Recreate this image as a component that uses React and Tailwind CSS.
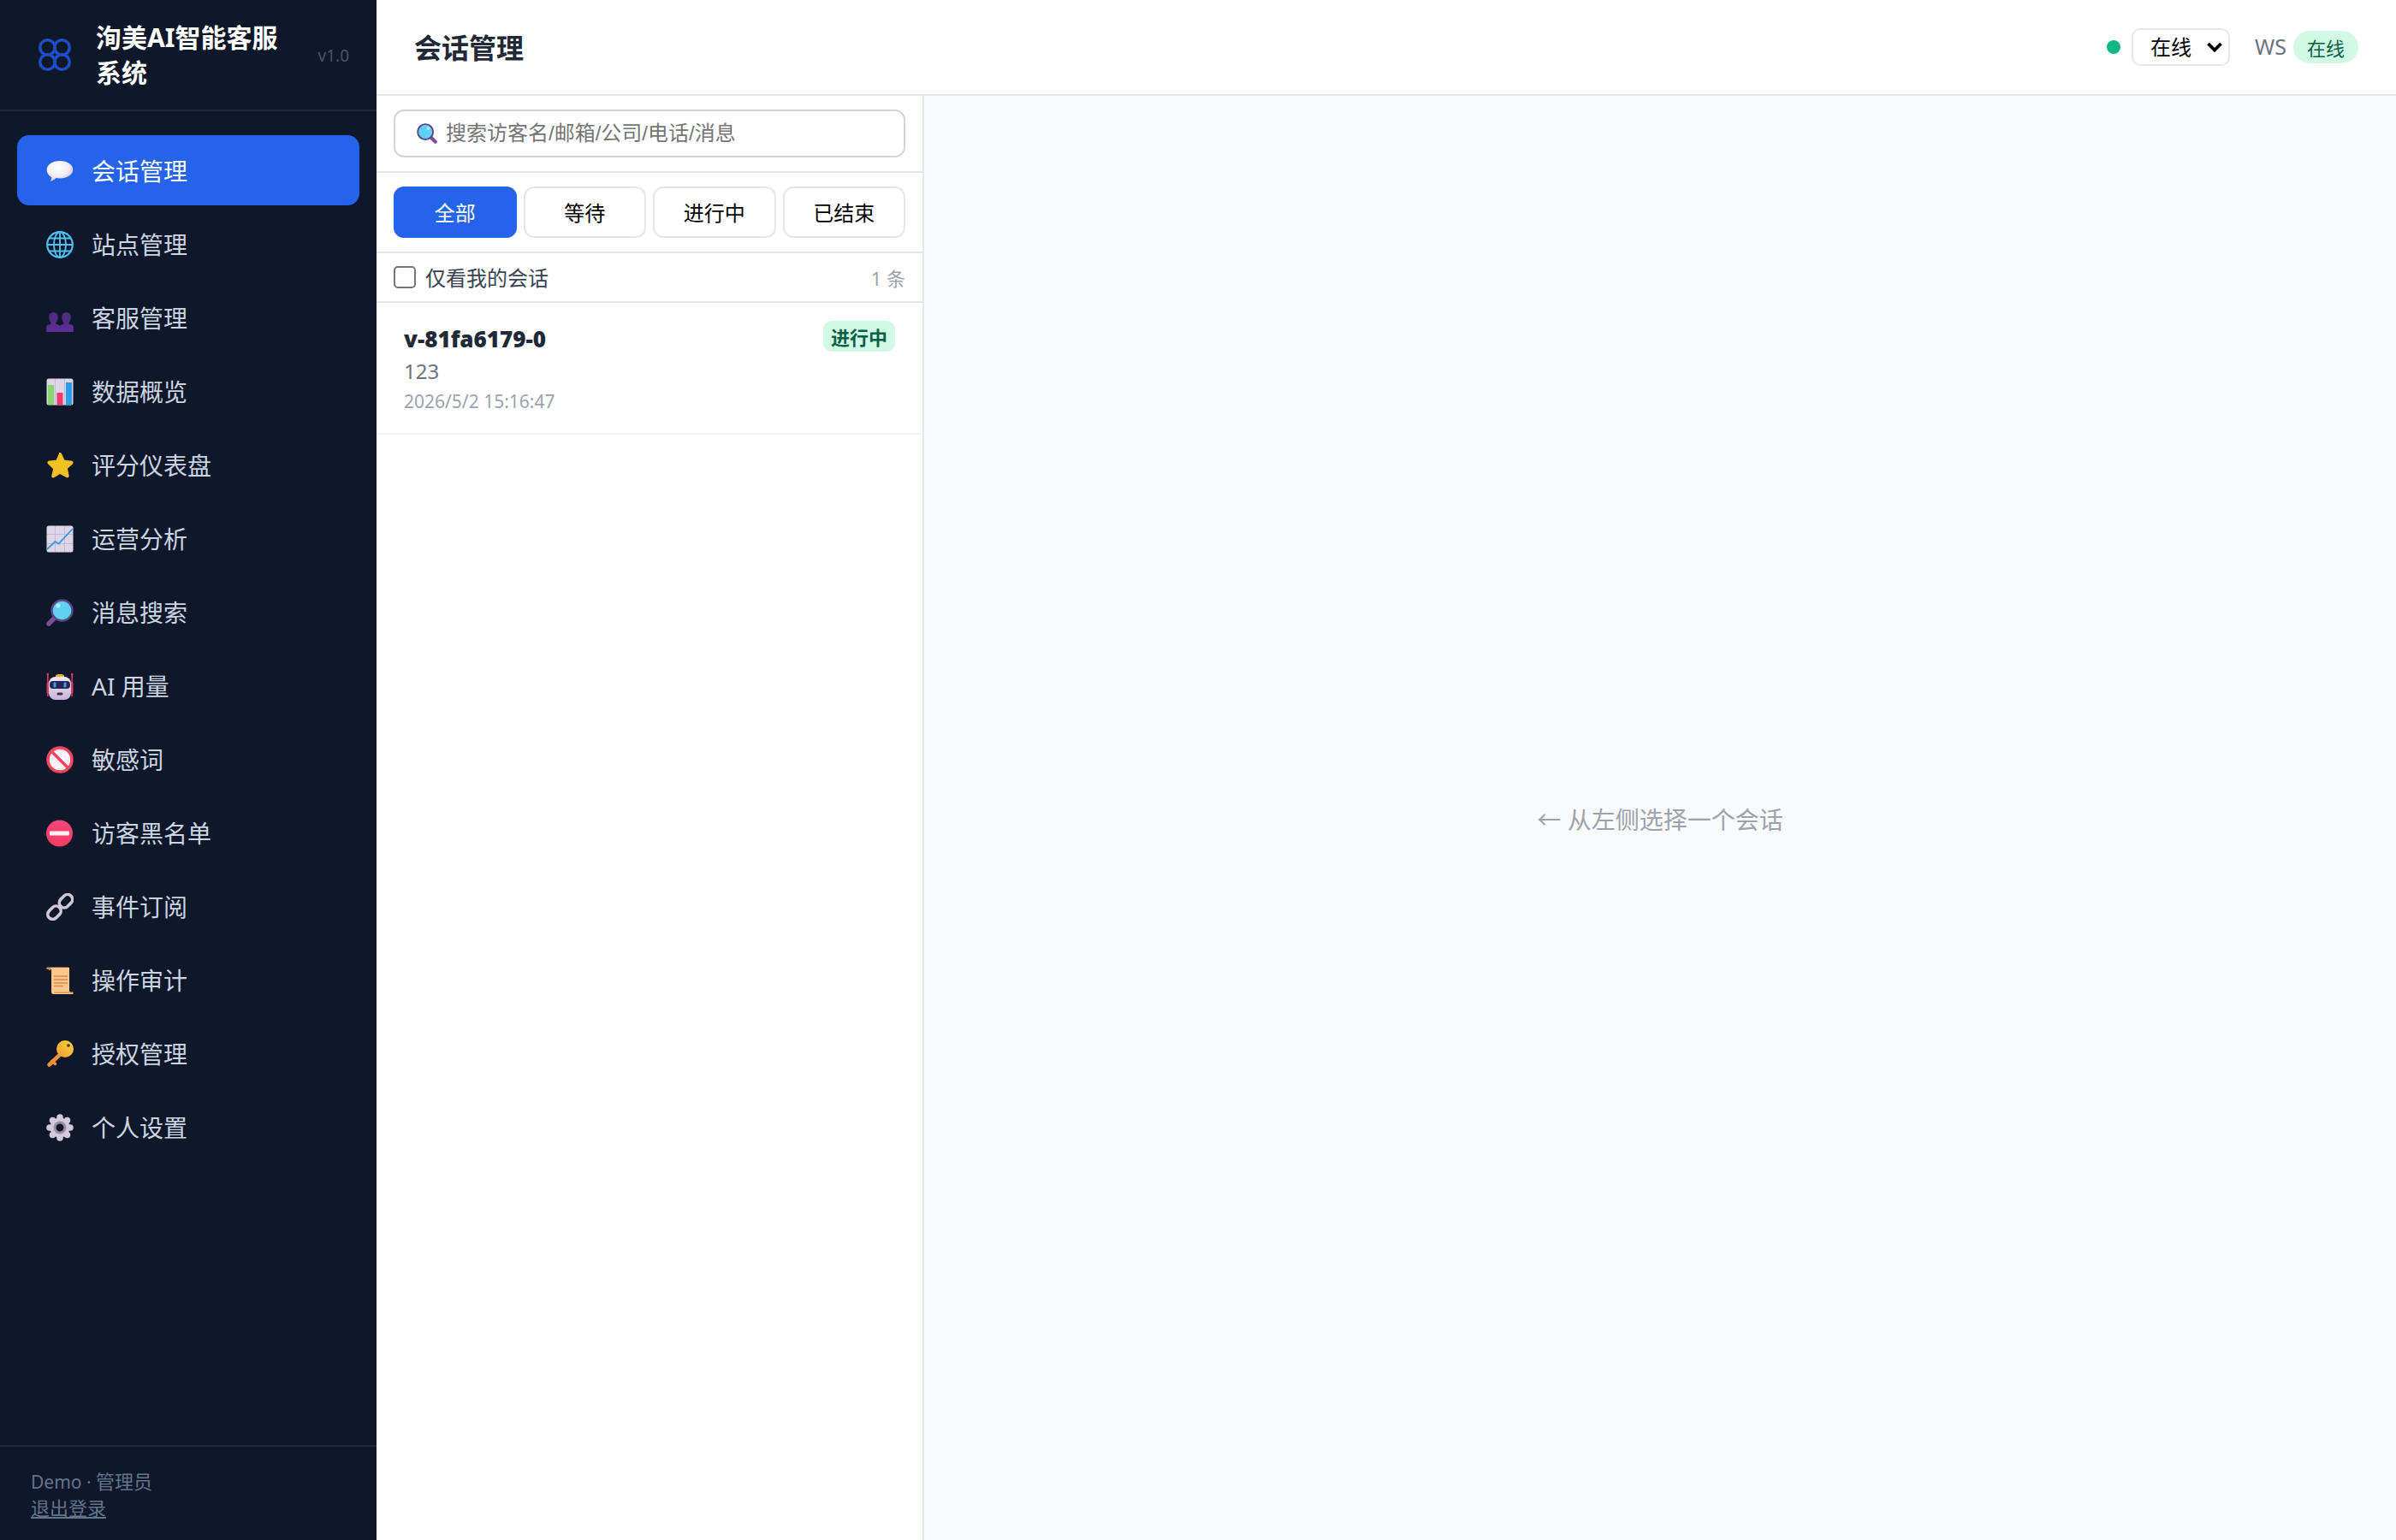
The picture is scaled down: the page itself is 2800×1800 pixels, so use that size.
import React from 'react';

const IconChat = () => (
  <svg viewBox="0 0 32 32" className="h-8 w-8">
    <defs>
      <radialGradient id="chatFill" cx="0.42" cy="0.35" r="0.7">
        <stop offset="0" stopColor="#ffffff" />
        <stop offset="0.6" stopColor="#f2ecf4" />
        <stop offset="1" stopColor="#cdb9d6" />
      </radialGradient>
    </defs>
    <path d="M16 4c8.600 0 15.300 4.600 15.300 10.300S24.600 24.600 16 24.600c-1.600 0-3.100-.2-4.500-.5-1.500 1.800-3.700 3.200-5.800 3.600-.6 .1-.8-.4-.5-.8 .6-1 .9-2.200 .9-3.900C2.900 21.400 .7 18.100 .7 14.300 .7 8.600 7.400 4 16 4z" fill="url(#chatFill)" />
  </svg>
);

const IconGlobe = () => (
  <svg viewBox="0 0 32 32" className="h-8 w-8" fill="none" stroke="#4fc0f5" strokeWidth="1.900">
    <circle cx="16" cy="16" r="14.800" strokeWidth="2.200" />
    <ellipse cx="16" cy="16" rx="7" ry="14.800" />
    <path d="M16 1v30M1 16h30M3.500 8.500h25M3.500 23.500h25" />
  </svg>
);

const IconPeople = () => (
  <svg viewBox="0 0 32 32" className="h-8 w-8">
    <defs>
      <linearGradient id="peopleFill" x1="0" y1="0" x2="0" y2="1">
        <stop offset="0" stopColor="#4a2c7c" />
        <stop offset="1" stopColor="#5f2f96" />
      </linearGradient>
    </defs>
    <path d="M8.500 9c3.200 0 5.200 2.300 5.200 5.400 0 2.600-.8 5-2.200 6.300v2c2.300.4 4.300 1.300 4.500 3V32H.2v-6.300c.2-1.700 2.200-2.600 5.300-3v-2C4 19.400 3.300 17 3.300 14.400 3.300 11.300 5.300 9 8.500 9z" fill="url(#peopleFill)" />
    <path d="M23.500 9c3.200 0 5.200 2.300 5.200 5.400 0 2.600-.7 5-2.200 6.300v2c3.100.4 5.100 1.300 5.300 3V32H16v-6.300c.2-1.700 2.200-2.600 4.500-3v-2c-1.400-1.300-2.200-3.700-2.200-6.300 0-3.100 2-5.400 5.200-5.400z" fill="url(#peopleFill)" />
  </svg>
);

const IconBars = () => (
  <svg viewBox="0 0 32 32" className="h-8 w-8">
    <rect x="0.500" y="0.500" width="31" height="31" rx="2.500" fill="#ddd6e6" />
    <path d="M10.500 1v30M21.500 1v30" stroke="#c2bace" strokeWidth="1" />
    <rect x="2" y="8" width="7" height="23" fill="#86d96e" />
    <rect x="12.500" y="17" width="7" height="14" fill="#f5386f" />
    <rect x="23" y="5" width="7" height="26" fill="#2a9df0" />
  </svg>
);

const IconStar = () => (
  <svg viewBox="0 0 32 32" className="h-8 w-8">
    <path d="M16 1c1 0 1.700.6 2.200 1.600l3.200 7.200 7.800.8c2.400.3 3.100 2.300 1.500 3.900l-5.800 5.300 1.700 7.700c.5 2.300-1.200 3.600-3.200 2.400L16 26l-6.400 4c-2 1.200-3.700-.1-3.200-2.400l1.700-7.700-5.800-5.300C.7 12.900 1.400 10.900 3.800 10.600l7.800-.8 3.200-7.200C15 1.600 15 1 16 1z" fill="#f1c021" />
  </svg>
);

const IconLine = () => (
  <svg viewBox="0 0 32 32" className="h-8 w-8" fill="none">
    <rect x="0.500" y="0.500" width="31" height="31" rx="2.500" fill="#ddd6e6" />
    <path d="M10.500 1v30M21.500 1v30M1 10.500h30M1 21.500h30" stroke="#c2bace" strokeWidth="1" />
    <path d="M1 28l9.500-9 4 2.500L31 4" stroke="#3b97dd" strokeWidth="1.800" />
  </svg>
);

const IconLens = ({ flip, className = 'h-8 w-8' }) => (
  <svg viewBox="0 0 32 32" className={className} fill="none">
    <g transform={flip ? 'matrix(-1 0 0 1 32 0)' : undefined}>
      <path d="M19 19l10 10" stroke="#7d4f96" strokeWidth="5.500" strokeLinecap="round" />
      <circle cx="13.500" cy="13.500" r="12" fill="#5fd0f0" stroke="#5b4488" strokeWidth="2.500" />
      <circle cx="18" cy="8" r="2.500" fill="#b4ecfa" />
    </g>
  </svg>
);

const IconRobot = () => (
  <svg viewBox="0 0 32 32" className="h-8 w-8">
    <defs>
      <linearGradient id="robotFill" x1="0" y1="0" x2="0" y2="1">
        <stop offset="0" stopColor="#efeaf2" />
        <stop offset="1" stopColor="#c8b5dc" />
      </linearGradient>
    </defs>
    <path d="M11 4c0-1.500 2-2 5-2s5 .5 5 2v2H11z" fill="#e8b130" />
    <path d="M1.800 2v26M30.200 2v26" stroke="#e0395f" strokeWidth="1.500" />
    <circle cx="1.800" cy="2" r="1.300" fill="#e0395f" />
    <circle cx="30.200" cy="2" r="1.300" fill="#e0395f" />
    <rect x="0.500" y="11" width="4" height="14" rx="2" fill="#e0395f" />
    <rect x="27.500" y="11" width="4" height="14" rx="2" fill="#e0395f" />
    <rect x="3" y="5" width="26" height="27" rx="8" fill="url(#robotFill)" />
    <rect x="4" y="10" width="24" height="9" rx="4" fill="#2b2350" />
    <rect x="8.500" y="11.500" width="3" height="6" rx="1" fill="#2f9ff0" />
    <rect x="20.500" y="11.500" width="3" height="6" rx="1" fill="#2f9ff0" />
    <rect x="12.500" y="23.500" width="7" height="3" rx="1.500" fill="#3a3150" />
  </svg>
);

const IconBan = () => (
  <svg viewBox="0 0 32 32" className="h-8 w-8" fill="none">
    <circle cx="16" cy="16" r="14" fill="#fbf3fb" stroke="#f6475f" strokeWidth="3.500" />
    <path d="M6.500 6.500l19 19" stroke="#f6475f" strokeWidth="3.500" />
  </svg>
);

const IconNoEntry = () => (
  <svg viewBox="0 0 32 32" className="h-8 w-8">
    <defs>
      <linearGradient id="noEntryFill" x1="0" y1="0" x2="0" y2="1">
        <stop offset="0" stopColor="#f3467f" />
        <stop offset="1" stopColor="#fa3c5e" />
      </linearGradient>
    </defs>
    <circle cx="15.500" cy="16" r="15.500" fill="url(#noEntryFill)" />
    <rect x="4" y="13.500" width="23" height="5" rx="1" fill="#fdeef2" />
  </svg>
);

const IconLink = () => (
  <svg viewBox="0 0 32 32" className="h-8 w-8" fill="none" stroke="#cfc8d8" strokeWidth="3.600">
    <rect x="14.500" y="3.500" width="17" height="11.500" rx="5.750" transform="rotate(-45 23 9.250)" />
    <rect x="1" y="17" width="17" height="11.500" rx="5.750" transform="rotate(-45 9.500 22.750)" />
  </svg>
);

const IconScroll = () => (
  <svg viewBox="0 0 32 32" className="h-8 w-8" fill="none">
    <path d="M0 2.500C0 1 1 .5 2 .5h24l-1 2.500H5.500L4 4.500 2.500 3z" fill="#d9905a" />
    <path d="M5 1h22v27.500c0 1 1.500 1.200 4.500 1.200V31c0 .5-.5 1-1 1H9c-2.500 0-3-1-3-3V3C6 2 5.500 1 5 1z" fill="#fdc68c" />
    <path d="M9.500 30.800h21c.6 0 1-.4 1-.8l-1-.6H9.500z" fill="#d9905a" />
    <path d="M9 11h16M9 15h16M9 19h16M9 22.500h11" stroke="#d78a55" strokeWidth="1.300" />
  </svg>
);

const IconKey = () => (
  <svg viewBox="0 0 32 32" className="h-8 w-8" fill="none">
    <defs>
      <linearGradient id="keyFill" x1="1" y1="0" x2="0" y2="1">
        <stop offset="0" stopColor="#fcd535" />
        <stop offset="1" stopColor="#f29a36" />
      </linearGradient>
    </defs>
    <path d="M20 13L3.500 28.500" stroke="#ee9234" strokeWidth="4.500" strokeLinecap="round" />
    <path d="M7 24l3.500 3.500" stroke="#ee9234" strokeWidth="3.500" strokeLinecap="round" />
    <circle cx="22" cy="10" r="10" fill="url(#keyFill)" />
    <circle cx="26" cy="6" r="1.800" fill="#3a2d3f" />
  </svg>
);

const IconGear = () => (
  <svg viewBox="0 0 32 32" className="h-8 w-8" fill="none">
    <g fill="#d2c9de">
      <circle cx="16" cy="16" r="11.500" />
      <circle cx="16" cy="4" r="3.800" />
      <circle cx="16" cy="28" r="3.800" />
      <circle cx="4" cy="16" r="3.800" />
      <circle cx="28" cy="16" r="3.800" />
      <circle cx="7.500" cy="7.500" r="3.800" />
      <circle cx="24.500" cy="7.500" r="3.800" />
      <circle cx="7.500" cy="24.500" r="3.800" />
      <circle cx="24.500" cy="24.500" r="3.800" />
    </g>
    <circle cx="16" cy="16" r="6" fill="#0f172a" stroke="#98909f" strokeWidth="3" />
  </svg>
);

const navItems = [
  { label: '会话管理', icon: <IconChat />, active: true },
  { label: '站点管理', icon: <IconGlobe /> },
  { label: '客服管理', icon: <IconPeople /> },
  { label: '数据概览', icon: <IconBars /> },
  { label: '评分仪表盘', icon: <IconStar /> },
  { label: '运营分析', icon: <IconLine /> },
  { label: '消息搜索', icon: <IconLens flip /> },
  { label: 'AI 用量', icon: <IconRobot /> },
  { label: '敏感词', icon: <IconBan /> },
  { label: '访客黑名单', icon: <IconNoEntry /> },
  { label: '事件订阅', icon: <IconLink /> },
  { label: '操作审计', icon: <IconScroll /> },
  { label: '授权管理', icon: <IconKey /> },
  { label: '个人设置', icon: <IconGear /> },
];

const filters = ['全部', '等待', '进行中', '已结束'];

const Sidebar = () => (
  <aside className="flex w-[440px] shrink-0 flex-col bg-[#0f172a]">
    {/* Brand */}
    <div className="flex h-[130px] items-center border-b-2 border-[#1e293b] pl-[45px] pr-[32px]">
      <svg viewBox="0 0 38 38" className="h-[38px] w-[38px] shrink-0" fill="none" stroke="#1d4fc4" strokeWidth="3.600">
        <circle cx="10.500" cy="10.500" r="8.700" />
        <circle cx="27.500" cy="10.500" r="8.700" />
        <circle cx="10.500" cy="27.500" r="8.700" />
        <circle cx="27.500" cy="27.500" r="8.700" />
      </svg>
      <div className="ml-[29px] w-[235px] text-[30px] font-bold leading-[41px] text-white">洵美AI智能客服系统</div>
      <span className="ml-auto pt-[2px] text-[19px] text-[#475569]">v1.0</span>
    </div>

    <nav className="flex flex-col gap-[4px] px-[20px] pt-[28px]">
      {navItems.map((item) => (
        <a
          key={item.label}
          className={`flex h-[82px] items-center gap-[21px] rounded-[14px] pl-[34px] pt-[2px] text-[28px] ${
            item.active ? 'bg-[#2563eb] text-white' : 'text-[#cbd5e1]'
          }`}
        >
          {item.icon}
          <span>{item.label}</span>
        </a>
      ))}
    </nav>

    {/* Account */}
    <div className="mt-auto border-t-2 border-[#1e293b] pb-[23px] pl-[36px] pt-[25px] text-[22px] leading-[30px] text-[#64748b]">
      <div>
        <span className="text-[21px]">Demo · </span>管理员
      </div>
      <a className="underline">退出登录</a>
    </div>
  </aside>
);

const Topbar = () => (
  <header className="flex h-[112px] shrink-0 items-center justify-between border-b-2 border-[#e5e7eb] bg-white px-[44px]">
    <h1 className="pt-[2px] text-[32px] font-bold text-[#1f2937]">会话管理</h1>
    <div className="flex items-center">
      <span className="h-[16px] w-[16px] rounded-full bg-[#10b981]" />
      <div className="relative ml-[13px]">
        <select className="block h-[44px] w-[115px] appearance-none rounded-[10px] border-2 border-[#e5e7eb] bg-white pl-[20px] text-[24px] text-black">
          <option>在线</option>
        </select>
        <svg viewBox="0 0 18 12" className="absolute right-[9px] top-[16px] h-[12px] w-[18px]" fill="none" stroke="#000" strokeWidth="3.800">
          <path d="M1.500 2L9 9.500 16.500 2" />
        </svg>
      </div>
      <span className="ml-[29px] text-[25px] text-[#6b7280]">WS</span>
      <span className="ml-[8px] flex h-[38px] w-[76px] items-center justify-center rounded-full bg-[#d1fae5] pt-[3px] text-[22px] text-[#065f46]">在线</span>
    </div>
  </header>
);

const ConversationList = () => (
  <section className="flex w-[640px] shrink-0 flex-col border-r-2 border-[#e5e7eb] bg-white">
    <div className="border-b-2 border-[#e5e7eb] px-[20px] py-[16px]">
      <div className="relative">
        <IconLens className="absolute left-[27px] top-[16px] h-[24px] w-[24px]" />
        <input
          placeholder="搜索访客名/邮箱/公司/电话/消息"
          className="h-[56px] w-full rounded-[12px] border-2 border-[#d1d5db] pl-[59px] font-['Liberation_Sans','Noto_Sans_CJK_SC',sans-serif] text-[24px] placeholder:text-[#757575]"
        />
      </div>
    </div>

    <div className="flex gap-[8px] border-b-2 border-[#e5e7eb] px-[20px] py-[16px]">
      {filters.map((f, i) => (
        <button
          key={f}
          className={`h-[60px] flex-1 rounded-[12px] border-2 pt-[2px] text-[24px] ${
            i === 0 ? 'border-[#2563eb] bg-[#2563eb] text-white' : 'border-[#e5e7eb] bg-white text-black'
          }`}
        >
          {f}
        </button>
      ))}
    </div>

    <div className="flex h-[58px] items-center justify-between border-b-2 border-[#e5e7eb] px-[20px]">
      <label className="flex items-center gap-[11px] text-[24px] text-[#374151]">
        <input type="checkbox" className="m-0 h-[26px] w-[26px] appearance-none rounded-[5px] border-2 border-[#767676] bg-white" />
        <span className="pt-[2px]">仅看我的会话</span>
      </label>
      <span className="pt-[2px] text-[22px] text-[#9ca3af]">1 条</span>
    </div>

    <div className="h-[154px] border-b-2 border-[#f3f4f6] px-[32px] pt-[21px]">
      <div className="flex items-start justify-between">
        <span className="mt-[3px] text-[26px] font-black leading-[36px] text-[#1f2937]">v-81fa6179-0</span>
        <span className="flex h-[36px] w-[84px] items-center justify-center rounded-[10px] bg-[#d1fae5] pt-[2px] text-[22px] font-bold text-[#065f46]">进行中</span>
      </div>
      <div className="mt-[3px] text-[24px] leading-[34px] text-[#6b7280]">123</div>
      <div className="mt-[2px] text-[21px] leading-[32px] text-[#9ca3af]">2026/5/2 15:16:47</div>
    </div>
  </section>
);

export default function App() {
  return (
    <div className="flex h-[1800px] w-[2800px] overflow-hidden font-['Noto_Sans','Noto_Sans_CJK_SC',sans-serif]">
      <Sidebar />
      <main className="flex min-w-0 flex-1 flex-col">
        <Topbar />
        <div className="flex min-h-0 flex-1">
          <ConversationList />
          <div className="flex flex-1 items-center justify-center bg-[#f9fafb] pt-[4px] text-[28px] text-[#9ca3af]">
            ← 从左侧选择一个会话
          </div>
        </div>
      </main>
    </div>
  );
}
